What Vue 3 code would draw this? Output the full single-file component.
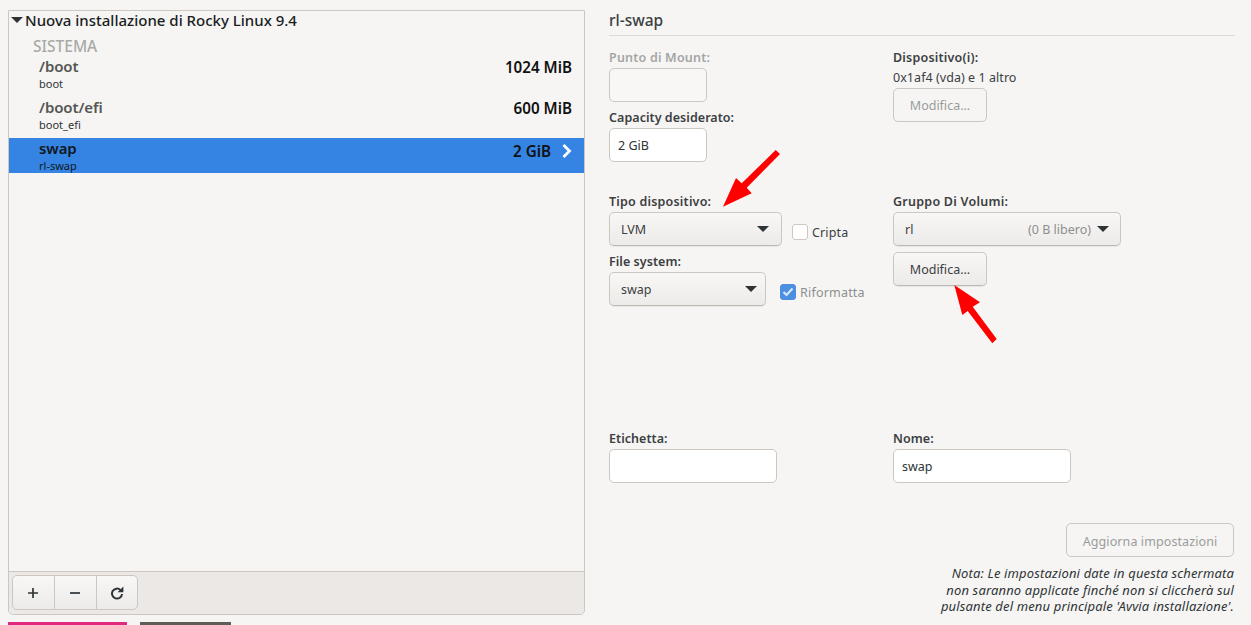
<script setup>
const mounts = [
  { path: '/boot', name: 'boot', size: '1024 MiB' },
  { path: '/boot/efi', name: 'boot_efi', size: '600 MiB' },
  { path: 'swap', name: 'rl-swap', size: '2 GiB', selected: true }
]
</script>

<template>
  <div class="screen">
    <div class="main">
      <section class="left">
        <div class="tree">
          <div class="root-row"><span class="expander"></span>Nuova installazione di Rocky Linux 9.4</div>
          <div class="system">SISTEMA</div>
          <div v-for="m in mounts" :key="m.path" class="mount" :class="{ selected: m.selected }">
            <div class="mount-names">
              <div class="mount-path">{{ m.path }}</div>
              <div class="mount-name">{{ m.name }}</div>
            </div>
            <div class="mount-size">{{ m.size }}</div>
            <svg v-if="m.selected" class="chev" width="12" height="14" viewBox="0 0 12 14"><path d="M2.5 1 L8.5 7 L2.5 13" fill="none" stroke="#fff" stroke-width="2.8"/></svg>
          </div>
        </div>
        <div class="toolbar">
          <div class="tools">
            <button class="tool"><svg width="12" height="12" viewBox="0 0 12 12"><path d="M1 6H11M6 1V11" stroke="#2e3436" stroke-width="1.7"/></svg></button>
            <button class="tool"><svg width="12" height="12" viewBox="0 0 12 12"><path d="M1 6H11" stroke="#2e3436" stroke-width="1.7"/></svg></button>
            <button class="tool"><svg width="14" height="14" viewBox="0 0 14 14"><path d="M10.4 3.9A5 5 0 1 0 12 8" fill="none" stroke="#2e3436" stroke-width="2"/><path d="M7.6 6.2H13.4V0.6Z" fill="#2e3436"/></svg></button>
          </div>
        </div>
      </section>

      <section class="right">
        <h2 class="title">rl-swap</h2>
        <div class="top-grid">
          <div class="col">
            <div class="label dim first">Punto di Mount:</div>
            <div class="entry small off"></div>
            <div class="label cap">Capacity desiderato:</div>
            <div class="entry small">2 GiB</div>
            <div class="label tipo">Tipo dispositivo:</div>
            <div class="row">
              <div class="combo w173"><span>LVM</span><i class="caret"></i></div>
              <div class="check cripta"><span class="box"></span>Cripta</div>
            </div>
            <div class="label fs">File system:</div>
            <div class="row">
              <div class="combo w157"><span>swap</span><i class="caret"></i></div>
              <div class="check rif">
                <span class="box on"><svg width="12" height="10" viewBox="0 0 12 10"><path d="M1.5 5 L4.5 8 L10.5 1.5" fill="none" stroke="#d7e6f8" stroke-width="2.2"/></svg></span>Riformatta
              </div>
            </div>
          </div>
          <div class="col">
            <div class="label first">Dispositivo(i):</div>
            <div class="device">0x1af4 (vda) e 1 altro</div>
            <button class="btn off mod-top">Modifica...</button>
            <div class="label gruppo">Gruppo Di Volumi:</div>
            <div class="combo w228"><span>rl</span><span class="free">(0 B libero)</span><i class="caret near"></i></div>
            <button class="btn mod">Modifica...</button>
          </div>
        </div>
        <div class="names">
          <div class="col">
            <div class="label">Etichetta:</div>
            <div class="entry w168"></div>
          </div>
          <div class="col">
            <div class="label">Nome:</div>
            <div class="entry w178">swap</div>
          </div>
        </div>
        <div class="footer">
          <button class="btn off update">Aggiorna impostazioni</button>
          <p class="note">Nota: Le impostazioni date in questa schermata<br>non saranno applicate finché non si cliccherà sul<br>pulsante del menu principale 'Avvia installazione'.</p>
        </div>
      </section>
    </div>
    <div class="bottom">
      <div class="bar pink"></div>
      <div class="bar dark"></div>
    </div>

    <svg class="arrows" width="1251" height="625" viewBox="0 0 1251 625">
      <path d="M775.7 150 L780 154 L746.7 187.7 L751.7 193.3 L723 206.7 L736 178 L741.7 183.3 Z" fill="#ff0000"/>
      <path d="M954.3 285 L980 302.3 L972.7 306.7 L996.7 339 L992.3 343.3 L967.7 311 L962.3 315 Z" fill="#ff0000"/>
    </svg>
  </div>
</template>

<style>
html, body { margin: 0; background: #f6f5f4; }
</style>

<style scoped>
.screen {
  position: relative;
  width: 1251px;
  height: 625px;
  overflow: hidden;
  background: #f6f5f4;
  color: #2e3436;
  font-family: "Noto Sans", sans-serif;
  font-size: 12px;
}
.main { display: flex; height: 622px; padding: 10px 16px 0 8px; box-sizing: border-box; gap: 24px; }
.left {
  width: 577px;
  height: 605px;
  box-sizing: border-box;
  border: 1px solid #cdc7c2;
  border-radius: 0 0 5px 5px;
  display: flex;
  flex-direction: column;
  flex: none;
}
.tree { flex: 1; }
.root-row { height: 18px; display: flex; align-items: center; font-size: 15px; font-weight: 500; color: #1a1d1e; padding-left: 2px; }
.expander { width: 0; height: 0; border-left: 6px solid transparent; border-right: 6px solid transparent; border-top: 6px solid #2e3436; margin-right: 2px; }
.system { height: 19px; line-height: 19px; padding-left: 24px; margin-top: 8px; margin-bottom: 1px; font-size: 15.5px; font-weight: 500; color: #a9aaa8; }
.mount { height: 41px; display: flex; align-items: flex-start; padding: 0 12px 0 30px; box-sizing: border-box; position: relative; }
.mount-names { flex: 1; }
.mount-path { font-size: 15px; line-height: 18px; font-weight: 600; color: #555753; letter-spacing: -0.1px; }
.mount-name { font-size: 11px; line-height: 14px; margin-top: 2px; color: #2e3436; }
.mount-size { font-size: 15.2px; font-weight: 600; line-height: 20px; color: #111; }
.mount.selected { height: 35px; background: #3584e4; margin-top: -1px; padding-top: 1px; padding-right: 33px; }
.mount.selected .mount-path { color: #101820; }
.mount.selected .mount-name { color: #101820; }
.mount.selected .mount-size { margin-top: 2px; }
.chev { position: absolute; right: 11px; top: 6px; }
.toolbar { height: 43px; border-top: 1px solid #cdc7c2; background: #ebe8e5; border-radius: 0 0 5px 5px; padding: 3px 0 0 3px; box-sizing: border-box; flex: none; }
.tools { display: inline-flex; height: 35px; border: 1px solid #cdc7c2; border-radius: 5px; background: linear-gradient(#f8f7f6, #edebe9); box-sizing: border-box; }
.tool { width: 42px; height: 33px; padding: 0 1px 0 0; border: 0; border-right: 1px solid #cdc7c2; background: transparent; display: flex; align-items: center; justify-content: center; }
.tool:last-child { border-right: 0; width: 40px; }

.right { width: 626px; flex: none; }
.title { margin: 0; height: 26px; line-height: 20px; font-size: 15.5px; font-weight: 500; color: #3a3f41; border-bottom: 1px solid #dcd9d6; box-sizing: border-box; }
.top-grid { display: grid; grid-template-columns: 284px 1fr; height: 394px; }
.names { display: grid; grid-template-columns: 284px 1fr; height: 78px; }
.col { display: flex; flex-direction: column; align-items: flex-start; }
.row { display: flex; align-items: center; }
.label { font-size: 12.5px; line-height: 17px; font-weight: 600; color: #3b4042; height: 17px; margin-bottom: 2px; letter-spacing: 0.05px; }
.label.first { margin-top: 13px; letter-spacing: 0.2px; }
.label.dim { color: #a5a6a5; }
.label.cap { margin-top: 7px; }
.label.tipo { margin-top: 31px; letter-spacing: 0.2px; }
.label.fs { margin-top: 7px; }
.label.gruppo { margin-top: 71px; letter-spacing: 0.25px; }
.entry { height: 34px; box-sizing: border-box; border: 1px solid #cdc7c2; border-radius: 5px; background: #fff; padding: 1px 8px 0; line-height: 32px; font-size: 12.5px; color: #2e3436; }
.entry.off { background: #f8f7f6; }
.small { width: 98px; }
.w168 { width: 168px; }
.w178 { width: 178px; }
.combo { height: 34px; box-sizing: border-box; border: 1px solid #cdc7c2; border-bottom-color: #bfb8b1; border-radius: 5px; background: linear-gradient(#f8f7f6, #edebe9); display: flex; align-items: center; padding: 0 12px 0 11px; font-size: 12.5px; color: #3b4042; box-shadow: 0 1px 1px rgba(0,0,0,.06); }
.combo span:first-child { flex: 1; }
.w173 { width: 173px; }
.w157 { width: 157px; padding-right: 8px; }
.w228 { width: 228px; }
.free { color: #8d8f8e; margin-right: 6px; }
.caret { width: 0; height: 0; border-left: 6px solid transparent; border-right: 6px solid transparent; border-top: 6px solid #2e3436; display: block; }
.caret.near { margin-right: -1px; }
.check { display: flex; align-items: center; gap: 4px; font-size: 12.5px; color: #3b4042; letter-spacing: 0.15px; }
.cripta { margin-left: 10px; margin-top: 6px; }
.rif { margin-left: 14px; margin-top: 6px; color: #8d8f8e; letter-spacing: 0.2px; }
.box { width: 16px; height: 16px; box-sizing: border-box; border: 1px solid #cdc7c2; border-radius: 3px; background: #fff; display: flex; align-items: center; justify-content: center; }
.box.on { background: #4a8fe0; border-color: #4a8fe0; }
.device { font-size: 12.5px; line-height: 17px; padding-top: 1px; color: #3b4042; margin-bottom: 2px; letter-spacing: 0.05px; }
.btn { height: 34px; box-sizing: border-box; border: 1px solid #cdc7c2; border-bottom-color: #bfb8b1; border-radius: 5px; background: linear-gradient(#f8f7f6, #edebe9); font-family: inherit; font-size: 12.5px; color: #3b4042; padding: 0; box-shadow: 0 1px 1px rgba(0,0,0,.06); }
.btn.off { background: #f6f5f4; border-color: #cdc7c2; box-shadow: none; color: #9a9c9b; }
.mod-top, .mod { width: 94px; }
.mod { margin-top: 6px; }
.footer { display: flex; flex-direction: column; align-items: flex-end; padding-right: 1px; margin-top: 15px; }
.update { width: 168px; letter-spacing: 0.1px; padding-top: 2px; }
.note { margin: 8px 0 0; text-align: right; font-style: italic; font-size: 13px; line-height: 16.5px; color: #2e3436; letter-spacing: 0.15px; }
.bottom { display: flex; padding-left: 8px; gap: 13px; height: 3px; }
.bar { height: 3px; }
.pink { width: 119px; background: #e0297f; }
.dark { width: 91px; background: #5e5c54; }
.arrows { position: absolute; left: 0; top: 0; pointer-events: none; }
</style>
